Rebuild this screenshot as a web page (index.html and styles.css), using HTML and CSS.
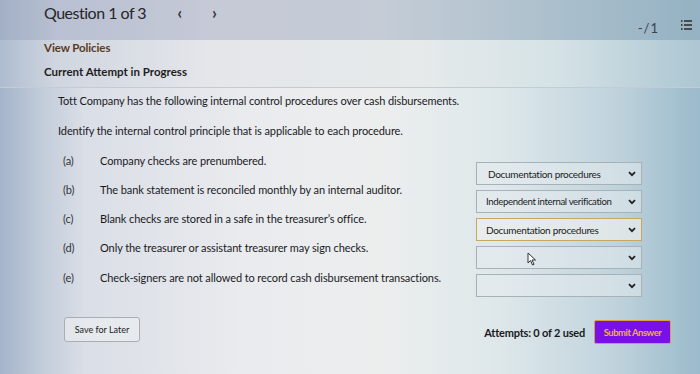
FILE: index.html
```html
<!DOCTYPE html>
<html>
<head>
<meta charset="utf-8">
<link rel="stylesheet" href="styles.css">
</head>
<body>
<div class="page">
  <header class="topbar">
    <div class="qnav">
      <span class="qtitle">Question 1 of 3</span>
      <span class="arrow prev">&lsaquo;</span>
      <span class="arrow next">&rsaquo;</span>
    </div>
    <div class="score">
      <span class="pts">-/1</span>
      <svg class="listicon" width="11" height="12" viewBox="0 0 11 12">
        <rect x="0" y="1" width="1.5" height="2" fill="#444"/>
        <rect x="0" y="5" width="1.5" height="2" fill="#444"/>
        <rect x="0" y="9" width="1.5" height="2" fill="#444"/>
        <rect x="3" y="1.2" width="8" height="1.6" fill="#333"/>
        <rect x="3" y="5.2" width="8" height="1.6" fill="#333"/>
        <rect x="3" y="9.2" width="8" height="1.6" fill="#333"/>
      </svg>
    </div>
  </header>
  <section class="subbar">
    <div class="policies">View Policies</div>
    <div class="attempt">Current Attempt in Progress</div>
  </section>
  <main class="content">
    <p class="intro">Tott Company has the following internal control procedures over cash disbursements.</p>
    <p class="intro second">Identify the internal control principle that is applicable to each procedure.</p>
    <div class="qa">
      <ul class="items">
        <li><span class="lbl">(a)</span><span>Company checks are prenumbered.</span></li>
        <li><span class="lbl">(b)</span><span>The bank statement is reconciled monthly by an internal auditor.</span></li>
        <li><span class="lbl">(c)</span><span>Blank checks are stored in a safe in the treasurer’s office.</span></li>
        <li><span class="lbl">(d)</span><span>Only the treasurer or assistant treasurer may sign checks.</span></li>
        <li><span class="lbl">(e)</span><span>Check-signers are not allowed to record cash disbursement transactions.</span></li>
      </ul>
      <div class="selects">
        <div class="sel"><span>Documentation procedures</span><svg class="chev" width="8" height="6" viewBox="0 0 8 6"><path d="M1 1.2 L4 4.2 L7 1.2" fill="none" stroke="#222" stroke-width="1.8"/></svg></div>
        <div class="sel tight"><span class="long">Independent internal verification</span><svg class="chev" width="8" height="6" viewBox="0 0 8 6"><path d="M1 1.2 L4 4.2 L7 1.2" fill="none" stroke="#222" stroke-width="1.8"/></svg></div>
        <div class="sel tight active"><span>Documentation procedures</span><svg class="chev" width="8" height="6" viewBox="0 0 8 6"><path d="M1 1.2 L4 4.2 L7 1.2" fill="none" stroke="#222" stroke-width="1.8"/></svg></div>
        <div class="sel"><span></span><svg class="chev" width="8" height="6" viewBox="0 0 8 6"><path d="M1 1.2 L4 4.2 L7 1.2" fill="none" stroke="#222" stroke-width="1.8"/></svg>
          <svg class="cursor" width="10" height="14" viewBox="0 0 10 14"><path d="M1 1 L1 11 L3.5 8.5 L5.5 13 L7 12.3 L5 8 L8.5 8 Z" fill="#fff" stroke="#333" stroke-width="1"/></svg>
        </div>
        <div class="sel"><span></span><svg class="chev" width="8" height="6" viewBox="0 0 8 6"><path d="M1 1.2 L4 4.2 L7 1.2" fill="none" stroke="#222" stroke-width="1.8"/></svg></div>
      </div>
    </div>
    <div class="footer">
      <button class="save">Save for Later</button>
      <div class="submitwrap">
        <span class="attempts">Attempts: 0 of 2 used</span>
        <button class="submit">Submit Answer</button>
      </div>
    </div>
  </main>
</div>
</body>
</html>
```
FILE: styles.css
```css
* { box-sizing: border-box; }
html, body { margin: 0; padding: 0; }
body {
  width: 700px;
  height: 374px;
  overflow: hidden;
  font-family: Lato, "Open Sans", sans-serif;
  color: #222;
  background: linear-gradient(90deg, #a4b4ca 0%, #c2ccda 6%, #dadee6 12%, #e9ebee 35%, #eceeee 55%, #dde7ea 72%, #bfd3dc 88%, #9bbacb 100%);
}
.page { display: flex; flex-direction: column; height: 374px; }
.topbar {
  height: 40px;
  display: flex;
  justify-content: space-between;
  padding: 0 8px 0 44px;
  background: linear-gradient(90deg, #a2b0c6 0%, #b8c0d2 8%, #c6c9d6 30%, #c4ccd6 55%, #b0c2ce 75%, #94b2c3 100%);
}
.qnav { display: flex; align-items: flex-start; padding-top: 3px; }
.qtitle { font-size: 16px; color: #26262a; letter-spacing: -0.5px; }
.arrow { font-size: 17px; font-weight: 700; color: #3a3a40; line-height: 20px; }
.prev { margin-left: 31px; }
.next { margin-left: 30px; }
.score { display: flex; align-items: center; padding-top: 15px; gap: 22px; padding-right: 0; }
.pts { font-size: 13px; color: #3a3f48; letter-spacing: 1px; }
.listicon { margin-top: -6px; }
.subbar {
  height: 48px;
  padding: 1px 0 0 44px;
  background: linear-gradient(90deg, #aebcd0 0%, #d0d6e0 8%, #e4e6ea 30%, #e6eaea 60%, #d4e2e6 80%, #acc6d2 100%);
  border-bottom: 1px solid #c4ccd2;
}
.policies { font-size: 11.5px; font-weight: 700; color: #5a3a20; letter-spacing: -0.1px; line-height: 14px; }
.attempt { font-size: 11.5px; font-weight: 700; color: #1e1e22; letter-spacing: 0; line-height: 14px; margin-top: 10px; }
.content { flex: 1; padding: 6px 0 0 58px; display: flex; flex-direction: column; }
.intro { margin: 0; font-size: 11px; line-height: 14px; color: #1a1a1e; letter-spacing: -0.1px; }
.second { margin-top: 16px; }
.qa { display: flex; margin-top: 13px; }
.items { list-style: none; margin: 0; padding: 0 0 0 5px; width: 418px; }
.items li { display: flex; font-size: 11px; line-height: 14px; height: 29px; letter-spacing: -0.1px; color: #1a1a1e; padding-top: 3px; }
.items li:nth-child(4) { height: 30px; }
.lbl { width: 37px; color: #333; }
.selects { display: flex; flex-direction: column; gap: 5px; padding-top: 11px; }
.sel {
  position: relative;
  width: 166px;
  height: 23px;
  border: 1px solid #a8b0b8;
  background: rgba(230, 236, 240, 0.5);
  display: flex;
  align-items: center;
  justify-content: space-between;
  padding: 0 5px 0 11px;
  font-size: 10px;
  color: #222;
  letter-spacing: -0.3px;
}
.tight { padding-left: 9px; }
.long { font-size: 9.6px; letter-spacing: -0.35px; white-space: nowrap; }
.active { border: 1.5px solid #c8a860; background: rgba(236, 238, 236, 0.7); }
.chev { flex: none; }
.cursor { position: absolute; left: 50px; top: 5px; }
.footer { display: flex; justify-content: space-between; align-items: center; margin-top: 23px; padding: 0 29px 0 6px; }
.save {
  font-family: Lato, sans-serif;
  font-size: 9px;
  color: #222;
  background: rgba(236, 240, 242, 0.6);
  border: 1px solid #a8aeb4;
  border-radius: 3px;
  width: 76px;
  height: 25px;
  padding: 0;
  margin-top: -5px;
}
.submitwrap { display: flex; align-items: center; gap: 9px; }
.attempts { font-size: 11px; font-weight: 700; color: #1a1a1e; letter-spacing: -0.2px; }
.submit {
  font-family: Lato, sans-serif;
  font-size: 9.5px;
  font-weight: 700;
  color: #f0b040;
  background: #7a10e8;
  border: 1.5px solid #d8a040;
  border-radius: 2px;
  width: 77px;
  height: 24px;
  padding: 0;
  letter-spacing: -0.5px;
}
```
